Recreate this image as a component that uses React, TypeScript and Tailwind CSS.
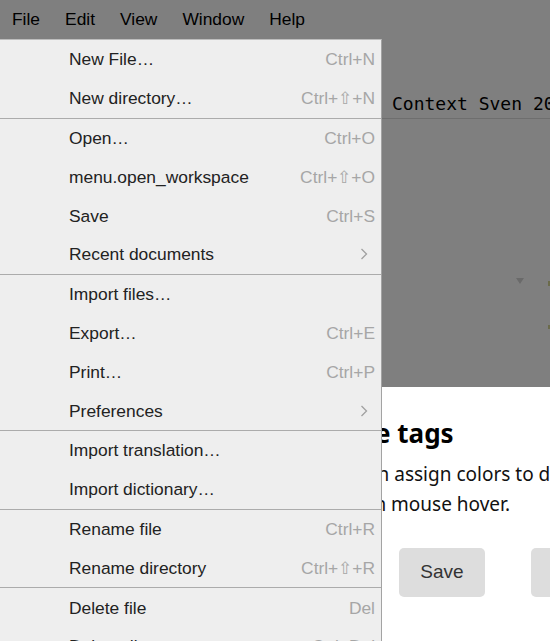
import React from 'react';

type MenuEntry =
  | { kind: 'item'; label: string; shortcut?: string; submenu?: boolean }
  | { kind: 'sep' };

const FILE_MENU: MenuEntry[] = [
  { kind: 'item', label: 'New File…', shortcut: 'Ctrl+N' },
  { kind: 'item', label: 'New directory…', shortcut: 'Ctrl+⇧+N' },
  { kind: 'sep' },
  { kind: 'item', label: 'Open…', shortcut: 'Ctrl+O' },
  { kind: 'item', label: 'menu.open_workspace', shortcut: 'Ctrl+⇧+O' },
  { kind: 'item', label: 'Save', shortcut: 'Ctrl+S' },
  { kind: 'item', label: 'Recent documents', submenu: true },
  { kind: 'sep' },
  { kind: 'item', label: 'Import files…' },
  { kind: 'item', label: 'Export…', shortcut: 'Ctrl+E' },
  { kind: 'item', label: 'Print…', shortcut: 'Ctrl+P' },
  { kind: 'item', label: 'Preferences', submenu: true },
  { kind: 'sep' },
  { kind: 'item', label: 'Import translation…' },
  { kind: 'item', label: 'Import dictionary…' },
  { kind: 'sep' },
  { kind: 'item', label: 'Rename file', shortcut: 'Ctrl+R' },
  { kind: 'item', label: 'Rename directory', shortcut: 'Ctrl+⇧+R' },
  { kind: 'sep' },
  { kind: 'item', label: 'Delete file', shortcut: 'Del' },
  { kind: 'item', label: 'Delete directory', shortcut: 'Ctrl+Del' },
];

const TOP_MENUS = ['File', 'Edit', 'View', 'Window', 'Help'];

const Chevron = () => (
  <svg width="8" height="12" viewBox="0 0 8 12" className="mr-[7px]">
    <path d="M1.5 1 L6.5 6 L1.5 11" fill="none" stroke="#a0a0a0" strokeWidth="1.3" />
  </svg>
);

export default function App() {
  return (
    <div className="relative w-[550px] h-[641px] overflow-hidden bg-white font-['Liberation_Sans',Arial,sans-serif]">
      {/* app behind the modal */}
      <div className="flex h-[39px] items-center gap-[25px] pl-[12px] text-[17.4px] text-black">
        {TOP_MENUS.map((m) => (
          <span key={m}>{m}</span>
        ))}
      </div>
      <div className="flex">
        <div className="w-[382px] shrink-0" />
        <div className="flex-1 min-w-0">
          <div className="h-[80px] border-b border-[#dcdcdc] pl-[10px] pt-[54px] font-['DejaVu_Sans_Mono',monospace] text-[18px] leading-[22px] whitespace-nowrap text-black">
            Context Sven 2023-01-05
          </div>
          <div className="mt-[158px] flex items-start justify-end h-[8px]">
            <div className="w-0 h-0 border-l-[4.5px] border-r-[4.5px] border-t-[6px] border-l-transparent border-r-transparent border-t-[#d4d4d4] mr-[24px] mt-[1px]" />
            <div className="w-[2px] h-[5px] bg-[#d6d696] mt-[4px]" />
          </div>
          <div className="mt-[40px] flex justify-end">
            <div className="w-[2px] h-[4px] bg-[#d6d696]" />
          </div>
        </div>
      </div>

      {/* modal backdrop */}
      <div className="absolute inset-0 bg-black/50" />

      {/* tag manager dialog */}
      <div className="absolute top-[387px] left-[252px] w-[620px] h-[300px] bg-white rounded-[6px] pt-[28px] pl-[34px] font-['Noto_Sans',sans-serif] text-black">
        <h2 className="text-[26px] leading-[36px] font-bold whitespace-nowrap">Manage tags</h2>
        <p className="mt-[8px] -ml-[14px] text-[19px] leading-[30px] whitespace-nowrap text-[#111]">
          Here you can assign colors to different tags, which will
          <br />
          be shown on mouse hover.
        </p>
        <div className="mt-[29px] flex gap-[46px] pl-[113px] font-['Liberation_Sans',Arial,sans-serif] text-[19px] text-[#333]">
          <button className="w-[86px] h-[49px] rounded-[5px] bg-[#dddddd]">Save</button>
          <button className="w-[112px] h-[49px] rounded-[5px] bg-[#dddddd]">Cancel</button>
        </div>
      </div>

      {/* open File dropdown */}
      <div className="absolute left-0 top-[39px] w-[382px] bg-[#eeeeee] border-t border-t-[#bdbdbd] border-r border-r-[#a3a3a3] text-[17.4px]">
        {FILE_MENU.map((e, i) =>
          e.kind === 'sep' ? (
            <div key={i} className="h-px bg-[#ababab]" />
          ) : (
            <div key={i} className="flex h-[38.8px] items-center pl-[69px] pr-[6px] whitespace-nowrap">
              <span className="flex-1 text-[#222]">{e.label}</span>
              {e.shortcut && <span className="text-[#a6a6a6]">{e.shortcut}</span>}
              {e.submenu && <Chevron />}
            </div>
          )
        )}
      </div>
    </div>
  );
}
